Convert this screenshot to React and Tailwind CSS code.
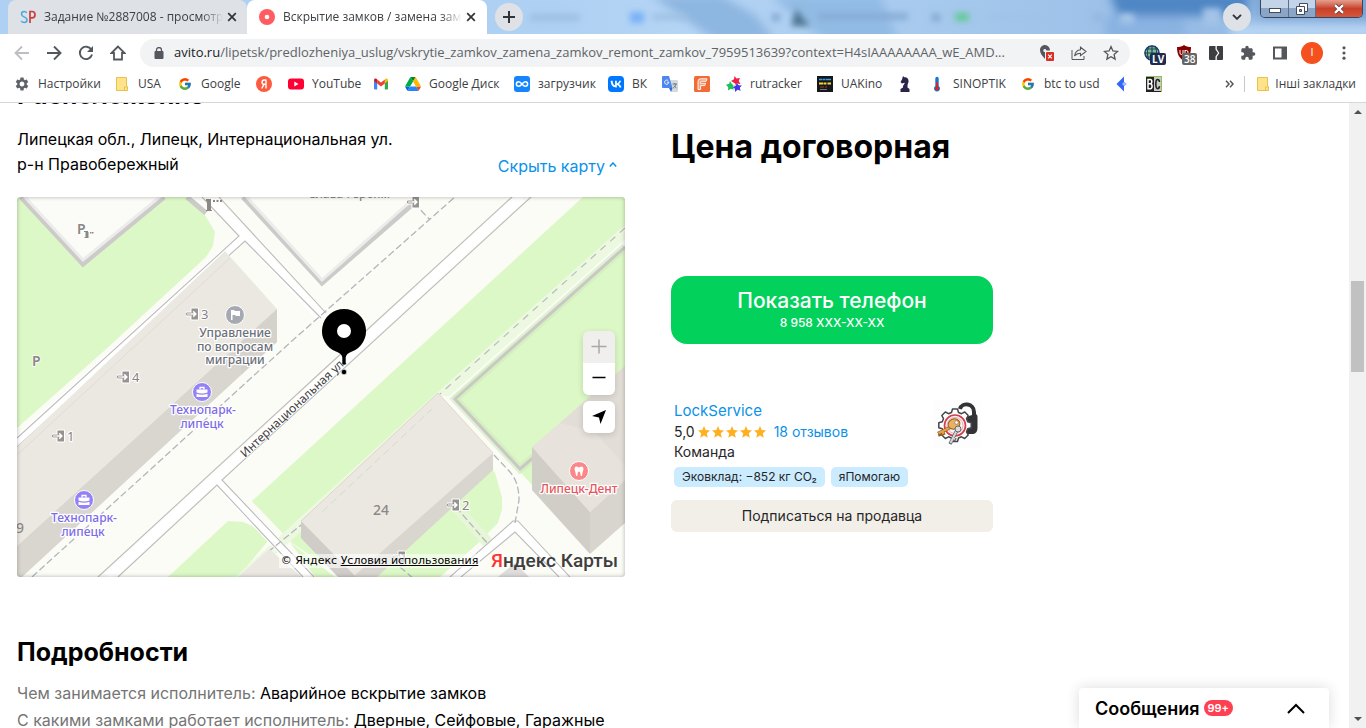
import React from "react";

const ui = "font-['Open_Sans','Noto_Sans',sans-serif]";

function GoogleG() {
  return (
    <svg viewBox="0 0 48 48" className="size-[14px]">
      <path fill="#FFC107" d="M43.6 20.1H42V20H24v8h11.3c-1.6 4.7-6.1 8-11.3 8-6.6 0-12-5.4-12-12s5.4-12 12-12c3.1 0 5.9 1.2 8 3l5.700-5.700C34 6.100 29.300 4 24 4 13 4 4 13 4 24s9 20 20 20 20-9 20-20c0-1.300-.1-2.700-.4-3.900z" />
      <path fill="#FF3D00" d="M6.300 14.700l6.600 4.800C14.700 15.100 19 12 24 12c3.100 0 5.900 1.200 8 3l5.700-5.700C34 6.100 29.300 4 24 4 16.300 4 9.700 8.300 6.300 14.700z" />
      <path fill="#4CAF50" d="M24 44c5.200 0 9.900-2 13.400-5.200l-6.200-5.200C29.200 35.100 26.700 36 24 36c-5.200 0-9.600-3.300-11.300-8l-6.500 5C9.500 39.600 16.200 44 24 44z" />
      <path fill="#1976D2" d="M43.600 20.100H42V20H24v8h11.300c-.8 2.200-2.200 4.200-4.100 5.600l6.200 5.200C37 39.200 44 34 44 24c0-1.300-.1-2.700-.4-3.900z" />
    </svg>
  );
}

function Gear() {
  return (
    <svg viewBox="0 0 24 24" className="size-4">
      <path fill="#5f6368" d="M19.140 12.940c.04-.3.06-.61.06-.94 0-.32-.02-.64-.07-.94l2.030-1.580c.18-.14.23-.41.12-.61l-1.920-3.320c-.12-.22-.37-.29-.59-.22l-2.390.96c-.5-.38-1.030-.7-1.620-.94l-.36-2.540c-.04-.24-.24-.41-.48-.41h-3.840c-.24 0-.43.17-.47.41l-.36 2.540c-.59.24-1.130.57-1.620.94l-2.390-.96c-.22-.08-.47 0-.59.22L2.740 8.870c-.12.21-.08.47.12.61l2.030 1.580c-.05.3-.09.63-.09.94s.02.64.07.94l-2.030 1.580c-.18.14-.23.41-.12.61l1.920 3.320c.12.22.37.29.59.22l2.390-.96c.5.38 1.030.7 1.620.94l.36 2.540c.05.24.24.41.48.41h3.840c.24 0 .44-.17.47-.41l.36-2.540c.59-.24 1.130-.56 1.620-.94l2.390.96c.22.08.47 0 .59-.22l1.920-3.320c.12-.22.07-.47-.12-.61l-2.010-1.580zM12 15.600c-1.980 0-3.600-1.620-3.600-3.600s1.620-3.600 3.600-3.600 3.600 1.620 3.600 3.600-1.620 3.600-3.600 3.600z" />
    </svg>
  );
}

function Folder() {
  return (
    <svg viewBox="0 0 16 16" className="size-4 shrink-0">
      <path d="M2.500 1.500h10v9h1v4h-11z" fill="#ffe38a" stroke="#e8c14a" />
      <path d="M10.500 14.500v-3.500h2" fill="none" stroke="#e8c14a" />
    </svg>
  );
}

function Yandex() {
  return (
    <svg viewBox="0 0 16 16" className="size-4">
      <circle cx="8" cy="8" r="8" fill="#fc5b3f" />
      <path d="M10 3.500v9M10 4H8.300C6.800 4 6 5 6 6.200c0 1.300.8 2.100 2.200 2.100H10M8 8.300l-2.300 4.200" fill="none" stroke="#fff" strokeWidth="1.400" />
    </svg>
  );
}

function YouTube() {
  return (
    <svg viewBox="0 0 16 16" className="size-4">
      <rect y="2.500" width="16" height="11" rx="3" fill="#f03" />
      <path d="M6.300 5.500v5l4.200-2.500z" fill="#fff" />
    </svg>
  );
}

function Gmail() {
  return (
    <svg viewBox="0 0 16 16" className="size-4">
      <path d="M1 4v8.500a1 1 0 0 0 1 1h2.200V7z" fill="#4285f4" />
      <path d="M15 4v8.500a1 1 0 0 1-1 1h-2.200V7z" fill="#34a853" />
      <path d="M11.800 4v3.500L15 5V4c0-1.500-1.500-2-2.500-1.200z" fill="#fbbc04" />
      <path d="M4.200 3.500L8 6.400l3.800-2.900v4L8 10.400 4.200 7.500z" fill="#ea4335" />
      <path d="M1 4v1l3.200 2.500V3.500l-.7-.7C2.500 2 1 2.500 1 4z" fill="#c5221f" />
    </svg>
  );
}

function Drive() {
  return (
    <svg viewBox="0 0 87 78" className="h-[14px] w-4">
      <path fill="#0066da" d="M6.600 66.900l3.900 6.700c.8 1.400 2 2.500 3.300 3.300L27.500 53H0c0 1.600.4 3.100 1.200 4.500z" />
      <path fill="#00ac47" d="M43.700 25L29.900 1.200c-1.400.8-2.500 1.900-3.300 3.300L1.200 48.500C.4 49.900 0 51.500 0 53h27.500z" />
      <path fill="#ea4335" d="M73.600 76.800c1.300-.8 2.500-1.900 3.300-3.300l9.300-16c.8-1.400 1.200-3 1.200-4.500H59.800l5.900 11.500z" />
      <path fill="#00832d" d="M43.700 25L57.400 1.200C56.100.4 54.500 0 52.900 0H34.400c-1.600 0-3.200.4-4.500 1.200z" />
      <path fill="#2684fc" d="M59.800 53H27.500L13.800 76.800c1.300.8 2.900 1.200 4.500 1.200h50.800c1.600 0 3.200-.4 4.500-1.200z" />
      <path fill="#ffba00" d="M73.400 26.500L60.700 4.500c-.8-1.400-1.900-2.500-3.300-3.300L43.700 25l16.100 28h27.500c0-1.600-.4-3.100-1.200-4.500z" />
    </svg>
  );
}

function Loader() {
  return (
    <svg viewBox="0 0 16 16" className="size-4">
      <rect width="16" height="16" rx="3" fill="#1484ff" />
      <path d="M8 8C6.800 6.500 6 5.700 4.700 5.700a2.300 2.300 0 0 0 0 4.600C6 10.300 6.800 9.500 8 8s2-2.300 3.300-2.300a2.300 2.300 0 0 1 0 4.600C10 10.300 9.200 9.500 8 8z" fill="none" stroke="#fff" strokeWidth="1.500" />
    </svg>
  );
}

function VK() {
  return (
    <svg viewBox="0 0 16 16" className="size-4">
      <rect width="16" height="16" rx="4" fill="#07f" />
      <path d="M8.500 11.500C4.800 11.500 2.800 9 2.700 4.800h1.900c.1 3.100 1.400 4.400 2.500 4.700V4.800h1.700v2.600c1.100-.1 2.200-1.300 2.600-2.600h1.700c-.3 1.600-1.500 2.800-2.300 3.300.8.400 2.100 1.400 2.600 3.400h-1.900c-.4-1.300-1.400-2.200-2.700-2.400v2.400z" fill="#fff" />
    </svg>
  );
}

function Translate() {
  return (
    <svg viewBox="0 0 16 16" className="size-4">
      <path d="M6 4h9a1 1 0 0 1 1 1v10a1 1 0 0 1-1 1H9z" fill="#d5d9de" />
      <path d="M0 1a1 1 0 0 1 1-1h6l3.500 12H1a1 1 0 0 1-1-1z" fill="#4c86ee" />
      <path d="M10.500 12L9 16l-2-4z" fill="#3367d6" />
      <path d="M6.300 4.800a2.100 2.100 0 1 0 .5 1.400H5" fill="none" stroke="#fff" strokeWidth=".9" />
      <path d="M10.500 8h4.500M12.700 7v1M14 8c-.5 2-1.500 3.200-2.800 4M12 9.500c.6 1.100 1.500 2 2.500 2.500" fill="none" stroke="#607080" strokeWidth=".9" />
    </svg>
  );
}

function FLogo() {
  return (
    <svg viewBox="0 0 16 16" className="size-4">
      <rect width="16" height="16" rx="1.500" fill="#f26a35" />
      <path d="M4 13.500V5.500Q4 2.800 6.500 2.800H13l-.8 2.500H7.500c-.7 0-.9.300-.9 1V7.300h5l-.8 2.300H6.600v3.900z" fill="#f8a07c" stroke="#fff" strokeWidth=".9" />
    </svg>
  );
}

function Rutracker() {
  return (
    <svg viewBox="0 0 16 16" className="size-4">
      <path d="M8.500 0l2 2.500 3.500-.5-1.300 3L14.500 8l-3.500-.5L8.500 10l-.8-3.400L5 5l3-1.700z" fill="#ed2241" />
      <path d="M4 5l1.700 2.800 3.300.2-2 2.500.8 3.200-3-1L2 14.500l.2-3.300L0 8.800l3.200-1z" fill="#19c35a" />
      <path d="M11 7l1.500 2.300 3.300.2-2 2.300.8 3-3-1L9 16l-.1-3.200L6.500 11l3-1z" fill="#4636e8" />
      <circle cx="8" cy="8.300" r="1.400" fill="#fff" />
    </svg>
  );
}

function UAKino() {
  return (
    <svg viewBox="0 0 16 16" className="size-4">
      <rect width="16" height="16" fill="#15171c" />
      <path d="M2 3.500h3M5.500 3.500h3M9 3.500h5" stroke="#35a0e0" strokeWidth="1.500" />
      <path d="M2 7.500h4M6.500 7.500h3M10.500 7.500h3.500" stroke="#f6d730" strokeWidth="2" />
      <path d="M3 11h4M8 11h2" stroke="#9c4020" /><path d="M3 13.500h7" stroke="#777" />
    </svg>
  );
}

function Knight() {
  return (
    <svg viewBox="0 0 16 16" className="size-4">
      <path d="M6 0l1.200 1.200C10 1 12 3 11.500 6L10.500 9v2.500l2 1.500v3h-9v-3L6 11.500C5.500 9.500 7.500 8.500 7.800 6.800L5 7.500 3.500 6 5 3.500z" fill="#29244a" />
    </svg>
  );
}

function Thermo() {
  return (
    <svg viewBox="0 0 16 16" className="size-4">
      <path d="M6.300 2.500a1.700 1.700 0 0 1 3.400 0V10a3 3 0 1 1-3.400 0z" fill="#1976c8" />
      <path d="M8 6v6" stroke="#e32020" strokeWidth="1.600" /><circle cx="8" cy="12.500" r="1.900" fill="#e32020" />
    </svg>
  );
}

function BlueArrow() {
  return (
    <svg viewBox="0 0 16 16" className="size-4">
      <path d="M10 .5V6l2.500 2L10 10v5.500L2.500 8z" fill="#3566f5" /><path d="M10 6l2.500 2L10 10 8 8z" fill="#9ec0ff" />
    </svg>
  );
}

function BC() {
  return (
    <svg viewBox="0 0 16 16" className="size-4">
      <rect width="16" height="16" fill="#8bc34a" /><rect y="1" width="15" height="15" fill="#222" /><rect x="8" y="1" width="7" height="14" fill="#c9c9c9" />
      <path d="M2 3.500h2.300q1.500 0 1.500 2.100t-1.500 2.100q1.800.2 1.800 2.500T4.300 12.700H2zM2 7.700h2.300" fill="none" stroke="#fff" strokeWidth="1.500" />
      <path d="M13.500 6Q13.200 3.500 11.700 3.500c-1.600 0-1.900 1.500-1.900 4.600s.3 4.600 1.900 4.600q1.500 0 1.800-2.500" fill="none" stroke="#222" strokeWidth="1.600" />
    </svg>
  );
}

const bookmarks = [
  { icon: Gear, label: "Настройки", w: "w-[100px]" },
  { icon: Folder, label: "USA", w: "w-[63px]" },
  { icon: GoogleG, label: "Google", w: "w-[79px]" },
  { icon: Yandex, name: "Яндекс", w: "w-8" },
  { icon: YouTube, label: "YouTube", w: "w-[85px]" },
  { icon: Gmail, name: "Gmail", w: "w-8" },
  { icon: Drive, label: "Google Диск", w: "w-[109px]" },
  { icon: Loader, label: "загрузчик", w: "w-[94px]" },
  { icon: VK, label: "ВК", w: "w-[54px]" },
  { icon: Translate, name: "Переводчик", w: "w-8" },
  { icon: FLogo, name: "F", w: "w-8" },
  { icon: Rutracker, label: "rutracker", w: "w-[91px]" },
  { icon: UAKino, label: "UAKino", w: "w-20" },
  { icon: Knight, name: "Шахматы", w: "w-8" },
  { icon: Thermo, label: "SINOPTIK", w: "w-[91px]" },
  { icon: GoogleG, label: "btc to usd", w: "w-[94px]" },
  { icon: BlueArrow, name: "Закладка", w: "w-8" },
  { icon: BC, name: "BC", w: "w-8" },
];

function CloseX() {
  return (
    <svg viewBox="0 0 10 10" className="size-[10px]">
      <path d="M1.200 1.200l7.600 7.600M8.800 1.200L1.200 8.800" stroke="#303338" strokeWidth="1.700" />
    </svg>
  );
}

function TabStrip() {
  return (
    <header className="relative flex h-[34px] shrink-0 overflow-hidden bg-linear-to-r from-[#aed0f2] from-40% via-[#b5d5f5] to-[#8db4e0]">
      <div className="absolute inset-0" aria-hidden="true">
        <svg className="size-full" viewBox="0 0 1366 34" preserveAspectRatio="none">
          <defs>
            <filter id="soft" x="-30%" y="-80%" width="160%" height="260%"><feGaussianBlur stdDeviation="5" /></filter>
            <filter id="blob" x="-30%" y="-80%" width="160%" height="260%"><feGaussianBlur stdDeviation="3" /></filter>
          </defs>
          <g filter="url(#soft)">
            <path d="M650 -5h70l35 20 20 25h-60z" fill="#8db6e0" />
            <path d="M770 -5h110l20 50h-70z" fill="#92bbe4" />
            <path d="M1108 -10h140v26h-130z" fill="#4f86c4" />
            <path d="M1105 16h80v24h-80z" fill="#8ab3e2" />
            <path d="M1250 -10h130v30h-120z" fill="#7ba6d6" />
            <rect x="1230" y="24" width="150" height="14" fill="#b9d6f4" />
          </g>
          <g filter="url(#blob)">
            <path d="M796 9l14 17h-19z" fill="#4d7590" />
            <rect x="530" y="14" width="50" height="7" fill="#9dbfe2" />
            <rect x="630" y="12" width="14" height="11" fill="#78b0f8" />
            <rect x="652" y="14" width="34" height="6" fill="#9cbfe2" />
            <rect x="772" y="14" width="8" height="7" fill="#7da3cc" />
            <rect x="818" y="13" width="90" height="7" fill="#86acd6" />
            <rect x="932" y="14" width="8" height="7" fill="#7da3cc" />
            <rect x="955" y="13" width="14" height="8" fill="#5fcb92" />
            <rect x="985" y="14" width="60" height="6" fill="#a0c3e8" />
            <rect x="1094" y="14" width="8" height="7" fill="#8fb4de" />
            <rect x="1120" y="14" width="14" height="9" fill="#a9c8ea" />
            <rect x="1203" y="8" width="18" height="18" fill="#a3c3e8" />
          </g>
        </svg>
      </div>
      <nav className="relative flex w-[487px] shrink-0" aria-label="Вкладки">
        <div className="ml-2 flex w-[239px] items-center rounded-t-lg bg-[#dee1e6] pr-[10px] pl-3">
          <svg viewBox="0 0 16 14" className="h-[14px] w-4 shrink-0">
            <path d="M6.700 3Q6 1.500 4.200 1.500 1.500 1.500 1.500 4q0 2 2.500 2.900Q7 8 7 10q0 2.500-2.900 2.500-2 0-2.900-1.600" fill="none" stroke="#4aa9e0" strokeWidth="1.500" />
            <path d="M10 13V1.500h2q3 0 3 3.200t-3 3.200h-2" fill="none" stroke="#c9403a" strokeWidth="1.700" />
          </svg>
          <span className="ml-2 flex-1 overflow-hidden [mask-image:linear-gradient(90deg,#000_88%,transparent)] text-[12px] whitespace-nowrap text-[#3c4043]">Задание №2887008 - просмотр</span>
          <button className="ml-1" aria-label="Закрыть вкладку"><CloseX /></button>
        </div>
        <div className="flex w-60 items-center rounded-t-lg bg-white pr-[11px] pl-3">
          <svg viewBox="0 0 16 16" className="size-4 shrink-0"><circle cx="8" cy="8" r="8" fill="#ff5b60" /><circle cx="8" cy="8" r="2.300" fill="#fff" /></svg>
          <span className="ml-2 flex-1 overflow-hidden [mask-image:linear-gradient(90deg,#000_88%,transparent)] text-[12px] whitespace-nowrap text-[#3c4043]">Вскрытие замков / замена замк</span>
          <button className="ml-1" aria-label="Закрыть вкладку"><CloseX /></button>
        </div>
      </nav>
      <button className="relative mt-[3px] ml-2 flex size-7 items-center justify-center rounded-full bg-[#dee1e6]" aria-label="Новая вкладка">
        <svg viewBox="0 0 12 12" className="size-3"><path d="M6 0v12M0 6h12" stroke="#303338" strokeWidth="2" /></svg>
      </button>
      <button className="relative mt-[3px] ml-auto flex size-7 items-center justify-center rounded-full bg-[#dee1e6]" aria-label="Поиск вкладок">
        <svg viewBox="0 0 10 6" className="h-[6px] w-[10px]"><path d="M1 .8l4 4 4-4" fill="none" stroke="#303338" strokeWidth="1.900" /></svg>
      </button>
      <div className="relative mr-[3px] ml-[9px] flex h-[18px] w-[103px] overflow-hidden rounded-b-[5px] border border-t-0 border-[#37465e]">
        <button className="flex w-7 items-center justify-center border-r border-[#5b6f8c] bg-linear-to-b from-[#c3d3e8] from-50% to-[#8aa5c6] to-50%" aria-label="Свернуть">
          <svg viewBox="0 0 12 5" className="mt-1 h-[5px] w-3"><rect x=".5" y=".5" width="11" height="4" fill="#fff" stroke="#454b5a" /></svg>
        </button>
        <button className="flex w-[27px] items-center justify-center border-r border-[#5b6f8c] bg-linear-to-b from-[#c3d3e8] from-50% to-[#8aa5c6] to-50%" aria-label="Восстановить">
          <svg viewBox="0 0 12 12" className="size-3"><path d="M3.500 .5h8v8h-8z" fill="#fff" stroke="#454b5a" /><path d="M.5 3.500h8v8h-8z" fill="#fff" stroke="#454b5a" /><path d="M3.500 6.500h2v2h-2z" fill="#8aa5c6" stroke="#454b5a" /></svg>
        </button>
        <button className="flex flex-1 items-center justify-center bg-linear-to-b from-[#e3a08f] from-0% via-[#c8402a] via-50% to-[#d5573a]" aria-label="Закрыть">
          <svg viewBox="0 0 12 10" className="h-[10px] w-3"><path d="M2 1l8 8M10 1L2 9" stroke="#5b3535" strokeWidth="3.800" /><path d="M2 1.200l8 7.600M10 1.200L2 8.800" stroke="#fff" strokeWidth="2.400" /></svg>
        </button>
      </div>
    </header>
  );
}

function Toolbar() {
  return (
    <div className="flex h-[37px] shrink-0 items-center bg-white pr-[14px] pl-[14px]">
      <div className="flex w-[126px] shrink-0 items-center gap-4">
        <button aria-label="Назад"><svg viewBox="0 0 16 16" className="size-4"><path d="M15 8H2M8 1.500L1.500 8 8 14.500" fill="none" stroke="#bcbec1" strokeWidth="1.800" /></svg></button>
        <button aria-label="Вперёд"><svg viewBox="0 0 16 16" className="size-4"><path d="M1 8h13M8 1.500L14.500 8 8 14.500" fill="none" stroke="#54585c" strokeWidth="1.900" /></svg></button>
        <button aria-label="Обновить"><svg viewBox="0 0 16 16" className="size-4"><path d="M13.300 4.600A6.200 6.200 0 1 0 14 9.500" fill="none" stroke="#54585c" strokeWidth="1.900" /><path d="M15 1v6H9z" fill="#54585c" /></svg></button>
        <button aria-label="Домой"><svg viewBox="0 0 16 16" className="size-4"><path d="M8 1.500L1.500 8H4v6.500h8V8h2.500z" fill="none" stroke="#54585c" strokeWidth="1.800" /></svg></button>
      </div>
      <div className="flex h-7 min-w-0 flex-1 items-center rounded-full bg-[#f1f3f4] pr-[11px] pl-[14px]">
        <svg viewBox="0 0 10 12" className="h-3 w-[10px] shrink-0"><rect x=".5" y="4" width="9" height="8" rx="1" fill="#54585c" /><path d="M2.500 4.500V3a2.500 2.500 0 0 1 5 0v1.500" fill="none" stroke="#54585c" strokeWidth="1.300" /></svg>
        <div className="ml-[10px] flex min-w-0 flex-1 items-center overflow-hidden text-[13px] whitespace-nowrap">
          <span className="text-[#202124]">avito.ru</span>
          <span className="min-w-0 overflow-hidden text-ellipsis text-[#5f6368]">/lipetsk/predlozheniya_uslug/vskrytie_zamkov_zamena_zamkov_remont_zamkov_7959513639?context=H4sIAAAAAAAA_wE_AMD...</span>
        </div>
        <div className="ml-4 flex shrink-0 items-center gap-4">
          <svg viewBox="0 0 16 16" className="size-4"><path d="M6 0a5.300 5.300 0 0 1 5 5.500H7.300A1.500 1.500 0 1 0 6 7v7C3.500 11 1 8.500 1 5.200 1 2.200 3.200 0 6 0z" fill="#54585c" /><rect x="7" y="7" width="8" height="9" rx="1" fill="#d93025" /><path d="M9.200 9.700l3.600 3.600M12.800 9.700l-3.600 3.600" stroke="#fff" strokeWidth="1.200" /></svg>
          <button aria-label="Поделиться"><svg viewBox="0 0 16 16" className="size-4"><path d="M1 5v9.500h12V11" fill="none" stroke="#54585c" /><path d="M3.500 11C4 7.500 6 5 9.500 4.700V2.200L15 6.500 9.500 10.700V8.200C7 8.200 5 9 3.500 11z" fill="none" stroke="#54585c" strokeWidth="1.100" /></svg></button>
          <button aria-label="В закладки"><svg viewBox="0 0 16 16" className="size-4"><path d="M8 1.600l1.900 4.300 4.700.5-3.500 3.100 1 4.600L8 11.700l-4.100 2.400 1-4.600-3.500-3.100 4.700-.5z" fill="none" stroke="#54585c" strokeWidth="1.300" /></svg></button>
        </div>
      </div>
      <div className="ml-[14px] flex h-full shrink-0 items-center gap-4">
        <button className="relative size-4" aria-label="Прокси LV">
          <svg viewBox="0 0 16 16" className="size-4"><circle cx="8" cy="8" r="7.500" fill="#7cc08a" /><path d="M8 .5v15M.5 8h15M2 4h12M2 12h12M5 1c-2 4-2 10 0 14M11 1c2 4 2 10 0 14" fill="none" stroke="#21406b" strokeWidth="1.200" /><circle cx="8" cy="8" r="7" fill="none" stroke="#21406b" strokeWidth="1.500" /></svg>
          <span className="absolute top-2 left-[6px] rounded-[2px] bg-[#1f2c4d] px-[2px] text-[10px] leading-3 font-bold text-white">LV</span>
        </button>
        <button className="relative size-4" aria-label="Блокировщик 38">
          <svg viewBox="0 0 16 16" className="size-4"><path d="M8 0c2 1.500 4 2 7 2 0 7-2 11-7 14C3 13 1 9 1 2c3 0 5-.5 7-2z" fill="#850000" /><path d="M4 5v3q0 1.500 1.500 1.500T7 8V5M9 5v5M9 5.500h1.500Q12 5.500 12 7.200T10.500 9H9" fill="none" stroke="#fff" /></svg>
          <span className="absolute top-2 left-[6px] rounded-[2px] bg-[#666] px-[2px] text-[10px] leading-3 font-semibold text-white">38</span>
        </button>
        <button aria-label="Расширение"><svg viewBox="0 0 16 16" className="size-4"><path d="M2 1h5.500v3.500L10 8l-2.500 3.500V15H2a1 1 0 0 1-1-1V2a1 1 0 0 1 1-1zM8.800 1H14a1 1 0 0 1 1 1v12a1 1 0 0 1-1 1H8.800v-3.200L11.400 8 8.800 4.200z" fill="#3c3e42" /></svg></button>
        <button aria-label="Расширения"><svg viewBox="0 0 24 24" className="size-4"><path d="M20.500 11H19V7c0-1.100-.9-2-2-2h-4V3.500a2.500 2.500 0 0 0-5 0V5H4c-1.100 0-2 .9-2 2v3.800h1.500a2.700 2.700 0 0 1 0 5.400H2V20c0 1.100.9 2 2 2h3.800v-1.500a2.700 2.700 0 0 1 5.400 0V22H17c1.100 0 2-.9 2-2v-4h1.500a2.500 2.500 0 0 0 0-5z" fill="#54585c" /></svg></button>
        <button aria-label="Боковая панель"><svg viewBox="0 0 16 16" className="size-4"><path d="M1 1.500h14v13H1z" fill="#54585c" /><path d="M3 3.500h6.500v9H3z" fill="#fff" /></svg></button>
        <button className="-mx-[3px] flex size-[22px] items-center justify-center rounded-full bg-[#f4511e] text-[11px] text-white" aria-label="Профиль">I</button>
        <button aria-label="Меню"><svg viewBox="0 0 16 16" className="size-4"><circle cx="8" cy="2.800" r="1.600" fill="#54585c" /><circle cx="8" cy="8" r="1.600" fill="#54585c" /><circle cx="8" cy="13.200" r="1.600" fill="#54585c" /></svg></button>
      </div>
    </div>
  );
}

function BookmarksBar() {
  return (
    <nav className="flex h-8 shrink-0 items-center border-b border-[#d5d7da] bg-white pr-[10px] pb-[6px] pl-[14px] text-[12px] leading-4 text-[#3c4043]" aria-label="Закладки">
      {bookmarks.map(({ icon: Icon, label, name, w }, i) => (
        <a key={i} href="#bookmark" aria-label={name} className={`flex shrink-0 items-center gap-2 whitespace-nowrap ${w}`}>
          <span className="flex size-4 shrink-0 items-center justify-center"><Icon /></span>
          {label && <span>{label}</span>}
        </a>
      ))}
      <button className="ml-auto" aria-label="Ещё закладки">
        <svg viewBox="0 0 9 8" className="h-2 w-[9px]"><path d="M1 .8L4 4 1 7.200M5 .8L8 4 5 7.200" fill="none" stroke="#54585c" strokeWidth="1.500" /></svg>
      </button>
      <span className="mx-[10px] h-4 w-px bg-[#c6c8cb]" />
      <a href="#other" className="flex items-center gap-1 whitespace-nowrap"><Folder /><span>Інші закладки</span></a>
    </nav>
  );
}

function Door({ x, y, n }) {
  return (
    <g>
      <path d={`M${x - 5} ${y}h6`} stroke="#fff" strokeWidth="5" />
      <path d={`M${x} ${y - 6}h7.500v12h-7.500z`} fill="#979390" stroke="#fff" />
      <path d={`M${x - 4.5} ${y - 1}h5v2h-5z`} fill="#fff" stroke="#979390" strokeWidth=".9" />
      <path d={`M${x} ${y}h4.500m-2.300-2.600l2.600 2.600-2.600 2.600`} fill="none" stroke="#fff" strokeWidth="1.500" />
      {n && <text x={x + 10} y={y + 5} fontSize="13" fill="#85827f" stroke="#fff" strokeWidth="2" paintOrder="stroke">{n}</text>}
    </g>
  );
}

function Briefcase({ x, y }) {
  return (
    <g>
      <circle cx={x} cy={y} r="9.500" fill="#9381f5" stroke="#fff" />
      <path d={`M${x - 5.5} ${y - 2.5}h11v3q-5.500 2-11 0zM${x - 5.5} ${y + 1.7}q5.500 2 11 0v3.300h-11z`} fill="#fff" />
      <path d={`M${x - 2} ${y - 2.5}v-2h4v2`} fill="none" stroke="#fff" strokeWidth="1.300" />
    </g>
  );
}

function MapDrawing() {
  return (
    <svg viewBox="17 197 608 380" preserveAspectRatio="xMidYMid slice" className="size-full font-['Noto_Sans',sans-serif]" role="img" aria-label="Карта">
      <rect x="17" y="197" width="608" height="380" fill="#fbfcf6" />
      {/* parks */}
      <g fill="#dcf8c6">
        <path d="M17 197h170l18 18 10 17-2 14-7 11-101 93-88 78z" />
        <path d="M583 197L252 501l40 40 10-20L438 393l187-167v-29z" />
        <path d="M625 245L455 398l65 72 12-12v32l-32-38L625 375z" />
        <path d="M168 577l60-56 15 1q15 5 25 19l-30 36z" />
        <path d="M252 501l40 42 50 34h98l45-40 11-10 6-12v-20l-6-28z" />
        <path d="M290 542l45 35h-20z" />
      </g>
      <path d="M625 232L438 399M440 397L300 525l-62 57" stroke="#edf8e1" strokeWidth="11" fill="none" />
      <path d="M438 395l14 2 80 88 4 92h-30l-20-42 12-12 4-14v-12l-7-24z" fill="#fbfcf6" />
      <path d="M452 397l68 74 105-95V247z" fill="#dcf8c6" />
      <path d="M625 247L455 399l65 70 14-12" fill="none" stroke="#cfeabc" strokeWidth="8" strokeOpacity=".6" />
      <path d="M625 247L455 399l65 70 14-12" fill="none" stroke="#c9c8c4" strokeWidth="3" />
      <path d="M456 507l34 38" stroke="#e6f6d6" strokeWidth="11" />
      {/* streets */}
      <path d="M108 577L521 197M218 482l90 95M210 197l111 120M242 238L17 442M455 577l60-51 49 51" fill="none" stroke="#fff" strokeWidth="10" />
      <path d="M98 577L320 373 512 197M118 577l99-92 86 92M314 577l-92-97L531 197M202 197l37 39L17 438M219 197l107 116M321 318l-76-77L17 447M450 577l63-56h5l52 56M461 577l54-45 44 45" fill="none" stroke="#bdbcbc" strokeWidth="1.100" />
      <path d="M32 577L293 340 455 197M414 203l16 17M494 455l16 17q9 10 9 28l-4 23M268 552l38-31M456 507l32 37M400 567l14 12" fill="none" stroke="#b3b5bd" strokeWidth="1.300" strokeDasharray="7 3" />
      <path d="M625 228L440 394" stroke="#b9bdbb" strokeWidth="1.200" strokeDasharray="7 6" />
      {/* fenced lots */}
      <path d="M21 195l62 68 82-68z" fill="#fbfcf8" />
      <path d="M21 197l62 67 81-67M187 197l19 16M243 197l79 86 92-80" fill="none" stroke="#cccbca" strokeWidth="5" />
      <path d="M23 195l60 65 79-65M245 195l77 85 90-80" fill="none" stroke="#ececeb" strokeWidth="3" />
      {/* buildings */}
      <path d="M17 447L225 251l52 58L17 546z" fill="#ebe8e2" />
      <path d="M17 577v-31l260-237v33L22 577z" fill="#d9d6cf" />
      <path d="M277 309v33l-36 33v-34z" fill="#cfccc6" fillOpacity=".4" />
      <path d="M17 455L230 258" stroke="#dfdcd8" />
      <path d="M301 521L438 393l55 60-136 124h-4z" fill="#ebe8e2" />
      <path d="M493 453v17L377 577h-24z" fill="#d9d5cf" />
      <path d="M301 521v17l37 39h18z" fill="#d0ccc7" />
      <path d="M301 521L438 393l55 60" fill="none" stroke="#dcc9bd" strokeWidth=".7" />
      <path d="M322 512L432 409" stroke="#dad7d2" strokeDasharray="8 4" />
      <path d="M532 447l93-81v114l-35 32z" fill="#e7e3dc" />
      <path d="M560 423l65-57v100l-30-34z" fill="#ddd9d2" fillOpacity=".5" />
      <path d="M532 447v43l58 64v-42z" fill="#d1cdc7" />
      <path d="M590 512l35-32v43l-35 31z" fill="#d8d5cf" />
      <path d="M238 577l31-28 33 28z" fill="#ebe8e2" />
      <path d="M498 577l17-14 14 14z" fill="#dedddc" />
      {/* house numbers and entrances */}
      <g fill="#8b8885" fontWeight="500">
        <text x="77" y="234" fontSize="14" fontWeight="600" stroke="#fff" strokeWidth="1.500" paintOrder="stroke">P</text>
        <text x="32" y="366" fontSize="14" fontWeight="600" stroke="#fff" strokeWidth="1.500" paintOrder="stroke">P</text>
        <text x="373" y="515" fontSize="14">24</text>
        <text x="16" y="533" fontSize="14">9</text>
        <text x="308" y="198" fontSize="12">Слава Героям</text>
        <path d="M85.500 232h3v6h-4v-1h1zM84 231h4v1h-4zM90 232h1.500v1.500H90zM92 232h1.500v1.500H92zM207 201h4v9h1v1h-6v-1h1zM206 199h5v2h-5zM213 200h2v2h-2zM216.500 200h2v2h-2zM220 200h2v2h-2z" />
      </g>
      <Door x={191} y={314} n="3" />
      <Door x={122} y={377} n="4" />
      <Door x={57} y={436} n="1" />
      <Door x={452} y={505} n="2" />
      <Door x={398} y={557} />
      <Door x={412} y={202} />
      {/* places */}
      <circle cx="235" cy="315" r="9.500" fill="#a5aab2" stroke="#fff" />
      <path d="M231 320v-10h3l1 1h5v5h-4l-1-1h-2.500v5z" fill="#fff" />
      <g fontSize="12" fontWeight="500" textAnchor="middle" stroke="#fff" strokeWidth="2.500" paintOrder="stroke" strokeLinejoin="round">
        <g fill="#6b7078">
          <text x="235" y="337">Управление</text><text x="235" y="351">по вопросам</text><text x="235" y="364">миграции</text>
        </g>
        <g fill="#7d6ce8">
          <text x="203" y="414">Технопарк-</text><text x="202" y="428">липецк</text>
          <text x="84" y="522">Технопарк-</text><text x="83" y="536">липецк</text>
        </g>
        <text x="579" y="493" fill="#e5565c">Липецк-Дент</text>
      </g>
      <Briefcase x={202} y={392} />
      <Briefcase x={84} y={500} />
      <circle cx="579" cy="471" r="9.500" fill="#fa8889" stroke="#fff" />
      <path d="M579 467.500q-4-2.500-4.500 1c0 2 1 3 1.300 6 .2 2 1.500 2 1.700 0 .2-2 .5-3 1.500-3s1.300 1 1.500 3c.2 2 1.500 2 1.700 0 .3-3 1.300-4 1.300-6q-.5-3.500-4.500-1z" fill="#fff" />
      <text transform="translate(245 458) rotate(-43)" fontSize="12" fill="#3d3d3d" stroke="#fff" strokeWidth="1.500" paintOrder="stroke">Интернациональная ул.</text>
      {/* address pin */}
      <path d="M344 309a22 22 0 0 1 8 42.500q-6 2-6.300 6V364q-1.700 1.500-3.400 0v-6.500q-.3-4-6.300-6A22 22 0 0 1 344 309z" />
      <circle cx="344" cy="331" r="7" fill="#fff" />
      <circle cx="344" cy="372" r="2.700" stroke="#fff" strokeWidth=".6" />
    </svg>
  );
}

function MapPanel() {
  return (
    <div className="relative mt-5 h-[380px] overflow-hidden rounded-[3px]">
      <MapDrawing />
      <div className="pointer-events-none absolute inset-0 rounded-[3px] shadow-[inset_0_0_4px_rgba(0,0,0,0.3)]" />
      <div className="absolute top-[134px] right-[10px] flex w-8 flex-col gap-[6px]">
        <div className="flex flex-col overflow-hidden rounded-md shadow-[0_2px_6px_rgba(0,0,0,0.15)]">
          <button className="flex h-8 items-center justify-center bg-[#f0efed]" aria-label="Приблизить"><svg viewBox="0 0 16 16" className="size-4"><path d="M8 .5v14M.5 7.500h15" stroke="#a9a8a6" strokeWidth="1.500" /></svg></button>
          <button className="flex h-8 items-center justify-center bg-white" aria-label="Отдалить"><svg viewBox="0 0 16 16" className="size-4"><path d="M1.500 6.500h13" stroke="#000" strokeWidth="1.500" /></svg></button>
        </div>
        <button className="flex h-8 items-center justify-center rounded-md bg-white shadow-[0_2px_6px_rgba(0,0,0,0.15)]" aria-label="Моё местоположение"><svg viewBox="0 0 16 16" className="size-4"><path d="M15 1L9.500 15 8 8.500 1 7z" /></svg></button>
      </div>
      <div className="absolute right-[7px] bottom-1 flex items-center gap-[11px]">
        <span className="bg-white/60 px-[2px] font-['DejaVu_Sans',sans-serif] text-[11px] leading-[14px] whitespace-nowrap text-black">© Яндекс <a href="#terms" className="underline">Условия использования</a></span>
        <span className="font-['Roboto',sans-serif] text-[19px] leading-6 font-medium whitespace-nowrap text-[#403d3f]"><span className="text-[#f33]">Я</span>ндекс Карты</span>
      </div>
    </div>
  );
}

function SellerLogo() {
  return (
    <svg viewBox="0 0 48 48" className="size-12 shrink-0" role="img" aria-label="LockService">
      <rect width="48" height="48" fill="#fdfdfd" />
      <path d="M27 9c2-7 14-6 14 3v9" fill="none" stroke="#333336" strokeWidth="4" />
      <path d="M33 17l9-3q2.500 0 2.500 3v11q0 5-4 6h-7z" fill="#333336" />
      <g fill="#fff" stroke="#44474c" strokeWidth="1.500" strokeLinejoin="round">
        <path d="M19.500 9h5l1 3.500 3 1.200 3.300-1.700 3.400 3.500-1.700 3.200 1.200 3 3.500 1.100v5l-3.500 1-1.200 3 1.700 3.200-3.500 3.500-3.200-1.700-3 1.200-1 3.500h-5l-1-3.500-3-1.200-3.200 1.700L8.800 35l1.700-3.200-1.200-3-3.500-1v-5l3.500-1.100 1.200-3-1.700-3.200 3.500-3.500 3.200 1.700 3-1.200z" />
      </g>
      <circle cx="22" cy="25.500" r="10.500" fill="#fbf3f1" stroke="#cf3f4d" strokeWidth="1.700" />
      <circle cx="22" cy="25.500" r="8" fill="none" stroke="#e59aa0" strokeWidth=".8" />
      <path d="M18 27L5 33.500M9.500 32l1.500 3M6.500 33.500l1 2.500" stroke="#8d5b25" strokeWidth="3.600" /><path d="M18 27L5.500 33.300M9.500 32l1 2" stroke="#e6a046" strokeWidth="2.200" />
      <ellipse cx="21" cy="24" rx="6" ry="5" transform="rotate(-20 21 24)" fill="#eab260" stroke="#8d5b25" /><circle cx="23.500" cy="22.500" r="1.800" fill="#fff" stroke="#8d5b25" strokeWidth=".6" />
      <path d="M24 30l-7 14M19 38l4 2" stroke="#66686c" strokeWidth="3.400" /><path d="M24 30l-6.500 13M19.500 38l2.500 1.200" stroke="#d6d6d8" strokeWidth="1.900" />
      <circle cx="25" cy="29" r="3" fill="#dcdcde" stroke="#66686c" />
    </svg>
  );
}

function Stars() {
  return (
    <span className="mx-[3px] inline-flex gap-[2px]" role="img" aria-label="5 из 5">
      {[0, 1, 2, 3, 4].map((i) => (
        <svg key={i} viewBox="0 0 12 12" className="size-3"><path d="M6 0l1.700 4 4.300.4-3.200 2.900.9 4.400L6 9.400l-3.700 2.300.9-4.400L0 4.400 4.300 4z" fill="#ffb021" /></svg>
      ))}
    </span>
  );
}

function Page() {
  return (
    <main className="relative flex min-w-0 flex-1 gap-[46px] overflow-hidden bg-white pl-[17px] text-black">
      <section className="w-[608px] shrink-0">
        <h2 className="-mt-6 text-[25px] leading-8 font-bold">Расположение</h2>
        <div className="mt-4 flex items-end justify-between text-[16px] leading-[25px]">
          <p>Липецкая обл., Липецк, Интернациональная ул.<br />р-н Правобережный</p>
          <button className="mr-2 flex items-center gap-1 leading-[22px] text-[#0a92e8]">
            Скрыть карту
            <svg viewBox="0 0 8 5" className="mb-1 h-[5px] w-2"><path d="M.8 4.500L4 1l3.200 3.500" fill="none" stroke="#0a92e8" strokeWidth="1.500" /></svg>
          </button>
        </div>
        <MapPanel />
        <h2 className="mt-[59px] text-[25px] leading-8 font-bold">Подробности</h2>
        <dl className="mt-3 text-[16px] leading-[27px] whitespace-nowrap">
          <div><dt className="inline text-[#757575]">Чем занимается исполнитель: </dt><dd className="inline">Аварийное вскрытие замков</dd></div>
          <div><dt className="inline text-[#757575]">С какими замками работает исполнитель: </dt><dd className="inline">Дверные, Сейфовые, Гаражные</dd></div>
        </dl>
      </section>
      <aside className="w-[322px] shrink-0 pt-6">
        <h1 className="text-[32px] leading-10 font-bold whitespace-nowrap">Цена договорная</h1>
        <button className="mt-[109px] flex h-[68px] w-full flex-col items-center justify-center rounded-2xl bg-[#02d15c] pt-[2px] text-white">
          <span className="text-[21px] leading-6 font-medium">Показать телефон</span>
          <span className="text-[12px] leading-5 font-medium">8 958 XXX-XX-XX</span>
        </button>
        <div className="mt-[56px] flex items-start justify-between pr-3 pl-[3px]">
          <div className="text-[14px] leading-5 text-[#262626]">
            <a href="#seller" className="block text-[15px] leading-[22px] text-[#0a92e8]">LockService</a>
            <div className="flex items-center">5,0<Stars /><a href="#reviews" className="ml-[5px] text-[#0a92e8]">18 отзывов</a></div>
            <p>Команда</p>
          </div>
          <SellerLogo />
        </div>
        <div className="mt-[5px] flex gap-[6px] pl-[3px] text-[12px] leading-5 whitespace-nowrap text-[#262626]">
          <span className="rounded-[5px] bg-[#cbebff] px-2">Эковклад: −852 кг CO₂</span>
          <span className="rounded-[5px] bg-[#cbebff] px-2">яПомогаю</span>
        </div>
        <button className="mt-[13px] h-8 w-full rounded-md bg-[#f2efe9] pb-[2px] text-[14px] text-[#262626]">Подписаться на продавца</button>
      </aside>
      <button className="absolute right-5 bottom-0 flex h-10 w-[250px] items-center rounded-t bg-white px-4 shadow-[0_0_14px_rgba(0,0,0,0.14)]">
        <span className="text-[18px] font-semibold">Сообщения</span>
        <span className="ml-1 rounded-full bg-[#ff4053] px-[4px] text-[11px] leading-4 font-semibold text-white">99+</span>
        <svg viewBox="0 0 18 11" className="mr-2 ml-auto h-[11px] w-[18px]"><path d="M1 10l8-8 8 8" fill="none" stroke="#000" strokeWidth="2" /></svg>
      </button>
    </main>
  );
}

function Scrollbar() {
  return (
    <div className="flex w-[17px] shrink-0 flex-col items-center justify-between bg-[#f1f1f1] py-[7px]" aria-hidden="true">
      <svg viewBox="0 0 8 4" className="h-1 w-2"><path d="M0 4l4-4 4 4z" fill="#505050" /></svg>
      <div className="mt-[167px] mb-auto h-[91px] w-[13px] bg-[#c1c1c1]" />
      <svg viewBox="0 0 8 4" className="h-1 w-2"><path d="M0 0l4 4 4-4z" fill="#505050" /></svg>
    </div>
  );
}

export default function App() {
  return (
    <div className={`flex h-screen flex-col overflow-hidden bg-white ${ui}`}>
      <TabStrip />
      <Toolbar />
      <BookmarksBar />
      <div className="flex min-h-0 flex-1 font-['Inter','Open_Sans',sans-serif]">
        <Page />
        <Scrollbar />
      </div>
    </div>
  );
}
